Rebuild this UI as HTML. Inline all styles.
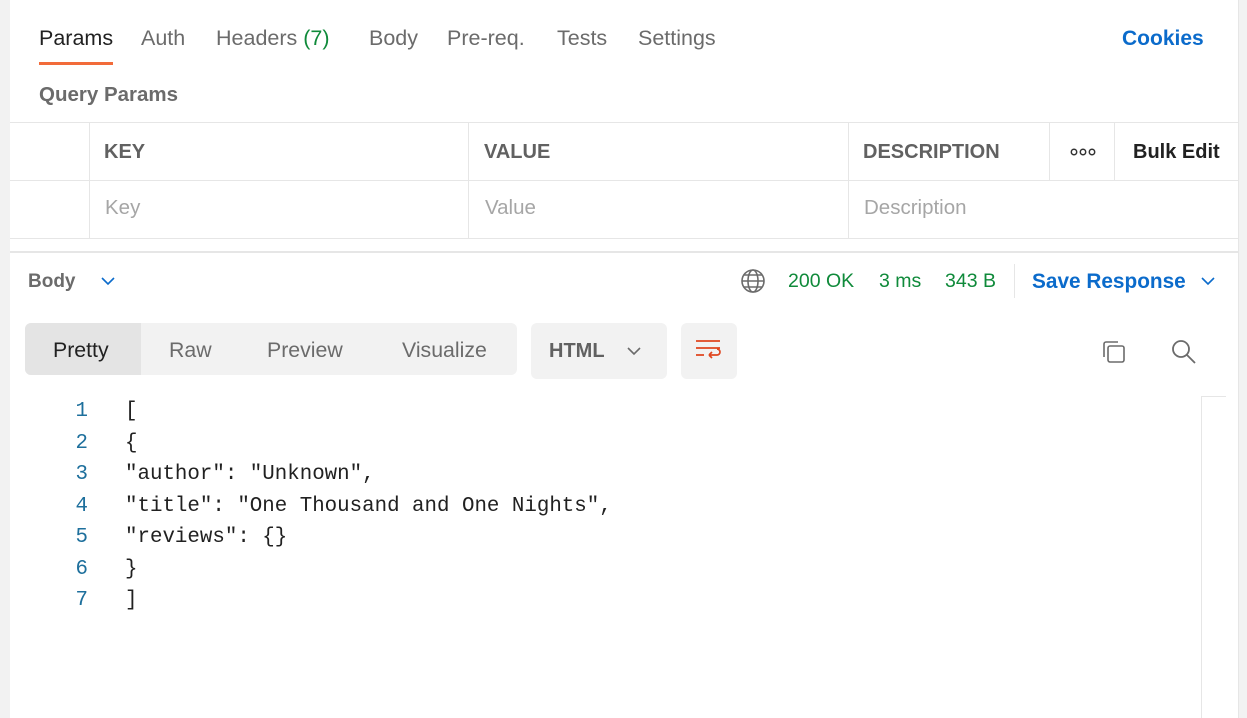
<!DOCTYPE html>
<html><head><style>
*{margin:0;padding:0;box-sizing:border-box}
body{width:1247px;height:718px;background:#f2f2f2;font-family:"Liberation Sans",sans-serif;position:relative;overflow:hidden}
.p{position:absolute;left:10px;top:0;width:1229px;height:718px;background:#fff;border-right:1px solid #e6e6e6}
.a{position:absolute;white-space:nowrap}
.tab{font-size:21.5px;color:#6b6b6b;top:26px}
.hl{position:absolute;background:#e6e6e6}
.th{font-size:20px;font-weight:bold;color:#616161;top:141px}
.ph{font-size:20.5px;color:#a6a6a6;top:196px}
.g{color:#0f8a3a;font-size:19.5px;top:270px}
.code{font-family:"Liberation Mono",monospace;font-size:20.8px;color:#212121}
.ln{font-family:"Liberation Mono",monospace;font-size:20.8px;color:#1d6f9c;width:30px;text-align:right}
</style></head><body>
<div class="p"></div>
<div class="a tab" style="left:39px;color:#212121">Params</div>
<div style="position:absolute;left:39px;top:62px;width:74px;height:3px;background:#f26b3a"></div>
<div class="a tab" style="left:141px">Auth</div>
<div class="a tab" style="left:216px">Headers <span style="color:#0f8a3a">(7)</span></div>
<div class="a tab" style="left:369px">Body</div>
<div class="a tab" style="left:447px">Pre-req.</div>
<div class="a tab" style="left:557px">Tests</div>
<div class="a tab" style="left:638px">Settings</div>
<div class="a" style="left:1122px;top:27px;font-size:21px;font-weight:bold;color:#0b6bcb">Cookies</div>
<div class="a" style="left:39px;top:83px;font-size:20.5px;font-weight:bold;color:#6b6b6b">Query Params</div>
<div class="hl" style="left:10px;top:122px;width:1229px;height:1px"></div>
<div class="hl" style="left:10px;top:180px;width:1229px;height:1px"></div>
<div class="hl" style="left:10px;top:238px;width:1229px;height:1px"></div>
<div class="hl" style="left:89px;top:123px;width:1px;height:115px"></div>
<div class="hl" style="left:468px;top:123px;width:1px;height:115px"></div>
<div class="hl" style="left:848px;top:123px;width:1px;height:115px"></div>
<div class="hl" style="left:1049px;top:123px;width:1px;height:57px"></div>
<div class="hl" style="left:1114px;top:123px;width:1px;height:57px"></div>
<div class="a th" style="left:104px">KEY</div>
<div class="a th" style="left:484px">VALUE</div>
<div class="a th" style="left:863px">DESCRIPTION</div>
<svg class="a" style="left:1070px;top:147px" width="26" height="10" viewBox="0 0 26 10" fill="none" stroke="#333" stroke-width="1.5"><circle cx="4" cy="5" r="2.7"/><circle cx="13" cy="5" r="2.7"/><circle cx="22" cy="5" r="2.7"/></svg>
<div class="a th" style="left:1133px;color:#212121">Bulk Edit</div>
<div class="a ph" style="left:105px">Key</div>
<div class="a ph" style="left:485px">Value</div>
<div class="a ph" style="left:864px">Description</div>
<div class="hl" style="left:10px;top:251px;width:1229px;height:2px"></div>
<div class="a" style="left:28px;top:271px;font-size:19px;font-weight:bold;color:#6b6b6b">Body</div>
<svg class="a" style="left:100px;top:275px" width="16" height="12"><path d="M2 3l6 6 6-6" stroke="#0b6bcb" stroke-width="1.6" fill="none"/></svg>
<svg class="a" style="left:740px;top:268px" width="26" height="26" viewBox="0 0 26 26" fill="none" stroke="#6b6b6b" stroke-width="1.6"><circle cx="13" cy="13" r="11"/><ellipse cx="13" cy="13" rx="5" ry="11"/><path d="M2 13h22M4 7h18M4 19h18"/></svg>
<div class="a g" style="left:788px">200 OK</div>
<div class="a g" style="left:879px">3 ms</div>
<div class="a g" style="left:945px">343 B</div>
<div class="hl" style="left:1014px;top:264px;width:1px;height:34px"></div>
<div class="a" style="left:1032px;top:270px;font-size:20.8px;font-weight:bold;color:#0b6bcb">Save Response</div>
<svg class="a" style="left:1200px;top:275px" width="16" height="12"><path d="M2 3l6 6 6-6" stroke="#0b6bcb" stroke-width="1.6" fill="none"/></svg>
<div style="position:absolute;left:25px;top:323px;width:492px;height:52px;background:#f2f2f2;border-radius:6px"></div>
<div style="position:absolute;left:25px;top:323px;width:116px;height:52px;background:#e4e4e4;border-radius:6px 0 0 6px"></div>
<div class="a" style="left:53px;top:338px;font-size:21.3px;color:#212121">Pretty</div>
<div class="a" style="left:169px;top:338px;font-size:21.3px;color:#6b6b6b">Raw</div>
<div class="a" style="left:267px;top:338px;font-size:21.3px;color:#6b6b6b">Preview</div>
<div class="a" style="left:402px;top:338px;font-size:21.3px;color:#6b6b6b">Visualize</div>
<div style="position:absolute;left:531px;top:323px;width:136px;height:56px;background:#f2f2f2;border-radius:6px"></div>
<div class="a" style="left:549px;top:340px;font-size:20px;font-weight:bold;color:#616161">HTML</div>
<svg class="a" style="left:626px;top:345px" width="16" height="12"><path d="M2 3l6 6 6-6" stroke="#6b6b6b" stroke-width="1.6" fill="none"/></svg>
<div style="position:absolute;left:681px;top:323px;width:56px;height:56px;background:#f2f2f2;border-radius:6px"></div>
<svg class="a" style="left:694px;top:338px" width="30" height="26" viewBox="0 0 30 26" fill="none" stroke="#e0461f" stroke-width="1.7"><path d="M2 3h24M2 10h24M2 17h8M15 17h8a3 3 0 0 0 0-6"/><path d="M15 17l3-3M15 17l3 3"/></svg>
<svg class="a" style="left:1100px;top:338px" width="28" height="28" viewBox="0 0 28 28" fill="none" stroke="#6b6b6b" stroke-width="1.6"><rect x="8" y="8" width="16" height="16" rx="2"/><path d="M4 19V6a2 2 0 0 1 2-2h12"/></svg>
<svg class="a" style="left:1170px;top:338px" width="28" height="28" viewBox="0 0 28 28" fill="none" stroke="#6b6b6b" stroke-width="1.8"><circle cx="11" cy="11" r="8"/><path d="M17 17l8 8"/></svg>
<div class="hl" style="left:1201px;top:396px;width:1px;height:322px"></div>
<div class="hl" style="left:1201px;top:396px;width:25px;height:1px"></div>
<div class="a ln" style="left:58px;top:400px">1</div><div class="a code" style="left:125px;top:400px">[</div>
<div class="a ln" style="left:58px;top:432px">2</div><div class="a code" style="left:125px;top:432px">{</div>
<div class="a ln" style="left:58px;top:463px">3</div><div class="a code" style="left:125px;top:463px">"author": "Unknown",</div>
<div class="a ln" style="left:58px;top:495px">4</div><div class="a code" style="left:125px;top:495px">"title": "One Thousand and One Nights",</div>
<div class="a ln" style="left:58px;top:526px">5</div><div class="a code" style="left:125px;top:526px">"reviews": {}</div>
<div class="a ln" style="left:58px;top:558px">6</div><div class="a code" style="left:125px;top:558px">}</div>
<div class="a ln" style="left:58px;top:589px">7</div><div class="a code" style="left:125px;top:589px">]</div>
</body></html>
